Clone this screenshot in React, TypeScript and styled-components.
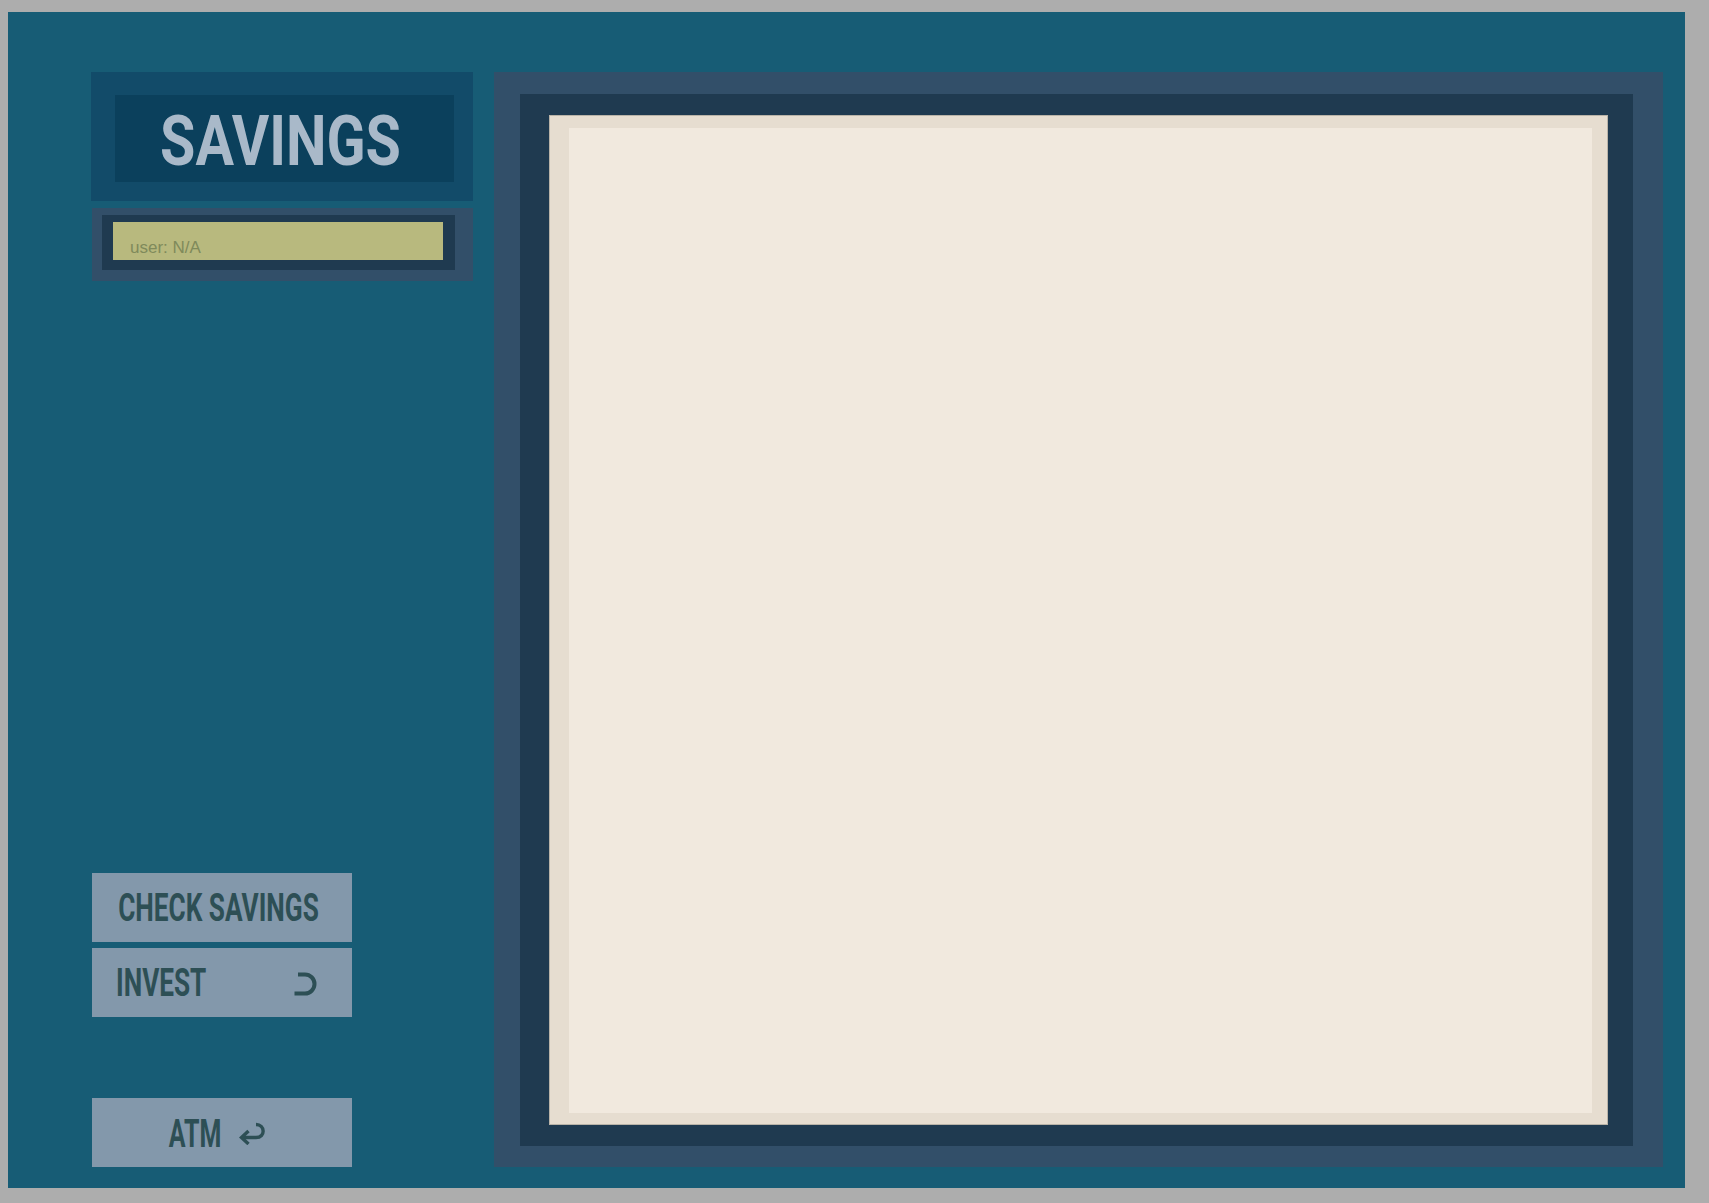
import React from "react";
import styled, { createGlobalStyle } from "styled-components";

const Global = createGlobalStyle`
  html, body {
    margin: 0;
    padding: 0;
    background: #adadad;
  }
  body {
    font-family: "Liberation Sans", Arial, sans-serif;
  }
`;

const Page = styled.div`
  padding: 12px 24px 15px 8px;
`;

const Panel = styled.div`
  width: 1677px;
  height: 1176px;
  box-sizing: border-box;
  background: #175c75;
  display: flex;
  gap: 21px;
  padding: 60px 22px 21px 83px;
`;

const Sidebar = styled.aside`
  width: 382px;
  flex: none;
  display: flex;
  flex-direction: column;
`;

const TitleFrame = styled.header`
  height: 129px;
  box-sizing: border-box;
  background: #124b69;
  padding: 23px 19px 19px 24px;
  display: flex;
`;

const TitlePlate = styled.div`
  flex: 1;
  background: #0b405c;
  display: flex;
  align-items: center;
  justify-content: center;
  padding: 7px 8px 0 0;
`;

const Stretched = styled.span<{ $size: number; $sy: number; $color: string }>`
  display: inline-block;
  font-family: Roboto, "DejaVu Sans", sans-serif;
  font-weight: 700;
  font-size: ${(p) => p.$size}px;
  line-height: 1;
  color: ${(p) => p.$color};
  transform: scaleY(${(p) => p.$sy});
  white-space: nowrap;
`;

const UserFrame = styled.div`
  margin: 7px 0 0 1px;
  height: 73px;
  box-sizing: border-box;
  background: #324f69;
  padding: 7px 18px 11px 10px;
  display: flex;
`;

const UserWell = styled.div`
  flex: 1;
  background: #1f3a50;
  padding: 7px 12px 10px 11px;
  display: flex;
`;

const UserField = styled.div`
  flex: 1;
  background: #b8b97e;
  display: flex;
  align-items: flex-end;
  padding: 0 0 4px 17px;
  font-family: "Liberation Sans", Arial, sans-serif;
  font-size: 17px;
  line-height: 1;
  color: #7f8a5b;
`;

const ButtonStack = styled.div`
  margin-top: auto;
  margin-left: 1px;
  display: flex;
  flex-direction: column;
  gap: 6px;
`;

const ActionButton = styled.button<{ $spread?: boolean; $gapTop?: number }>`
  width: 260px;
  height: 69px;
  box-sizing: border-box;
  margin-top: ${(p) => p.$gapTop ?? 0}px;
  background: #8398ab;
  border: none;
  padding: 2px 31px 0 24px;
  display: flex;
  align-items: center;
  justify-content: ${(p) => (p.$spread ? "space-between" : "center")};
  gap: 16px;
  color: #2d4f55;
  cursor: pointer;
`;

const Screen = styled.main`
  flex: 1;
  background: #324f69;
  padding: 22px 30px 21px 26px;
  display: flex;
`;

const Bezel = styled.div`
  flex: 1;
  background: #1f3a50;
  padding: 21px 25px 21px 29px;
  display: flex;
`;

const Paper = styled.div`
  flex: 1;
  background: #e6ddd0;
  border: 1px solid #b9b3a8;
  padding: 12px 15px 11px 19px;
  display: flex;
`;

const PaperInner = styled.div`
  flex: 1;
  background: #f1e9de;
`;

const IconSvg = styled.svg`
  display: block;
  flex: none;
`;

const InvestIcon = () => (
  <IconSvg width="26" height="28" viewBox="0 0 26 28" style={{ marginRight: 2 }}>
    <path
      d="M5 4.5 H12 A9.5 9.5 0 0 1 12 23.5 H1.5"
      fill="none"
      stroke="currentColor"
      strokeWidth="4"
    />
  </IconSvg>
);

const ReturnIcon = () => (
  <IconSvg width="31" height="23" viewBox="0 0 31 23">
    <path
      d="M19 2.5 C28 2.5 29 15.5 19 15.5 H5"
      fill="none"
      stroke="currentColor"
      strokeWidth="3.4"
    />
    <path
      d="M11.5 9 L4.5 15.5 L11.5 22"
      fill="none"
      stroke="currentColor"
      strokeWidth="3.4"
    />
  </IconSvg>
);

const BUTTON_TEXT = "#2d4f55";

export default function App() {
  return (
    <>
      <Global />
      <Page>
        <Panel>
          <Sidebar>
            <TitleFrame>
              <TitlePlate>
                <Stretched $size={57.4} $sy={1.22} $color="#a9b9c9">
                  SAVINGS
                </Stretched>
              </TitlePlate>
            </TitleFrame>
            <UserFrame>
              <UserWell>
                <UserField>user: N/A</UserField>
              </UserWell>
            </UserFrame>
            <ButtonStack>
              <ActionButton>
                <Stretched $size={26.2} $sy={1.5} $color={BUTTON_TEXT}>
                  CHECK SAVINGS
                </Stretched>
              </ActionButton>
              <ActionButton $spread>
                <Stretched $size={26.2} $sy={1.5} $color={BUTTON_TEXT}>
                  INVEST
                </Stretched>
                <InvestIcon />
              </ActionButton>
              <ActionButton $gapTop={75}>
                <Stretched $size={25} $sy={1.57} $color={BUTTON_TEXT}>
                  ATM
                </Stretched>
                <ReturnIcon />
              </ActionButton>
            </ButtonStack>
          </Sidebar>
          <Screen>
            <Bezel>
              <Paper>
                <PaperInner />
              </Paper>
            </Bezel>
          </Screen>
        </Panel>
      </Page>
    </>
  );
}
